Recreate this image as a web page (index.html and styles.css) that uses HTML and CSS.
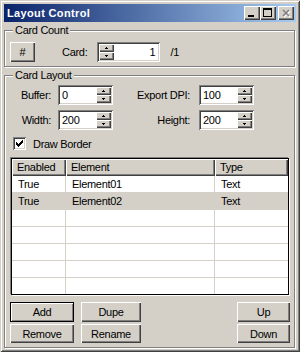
FILE: index.html
```html
<!DOCTYPE html>
<html lang="en">
<head>
    <meta charset="UTF-8">
    <title>Layout Control</title>
    <link rel="stylesheet" href="styles.css">
</head>
<body>

<div class="window">
    <div class="titlebar">
        <span class="title">Layout Control</span>
        <div class="caption-btns">
            <span class="cap-btn"><svg width="16" height="14"><rect x="4" y="9" width="6" height="2"/></svg></span>
            <span class="cap-btn"><svg width="16" height="14"><path d="M3 2h9v9h-9zM4 4v6h7v-6z" fill-rule="evenodd"/></svg></span>
            <span class="cap-btn close">
                <svg width="16" height="14">
                    <path d="M5 4L11 10M11 4L5 10" stroke="#fff" stroke-width="1.6" transform="translate(1 1)"/>
                    <path d="M5 4L11 10M11 4L5 10" stroke="#808080" stroke-width="1.6"/>
                </svg>
            </span>
        </div>
    </div>

    <!-- card count -->
    <div class="group">
        <div class="group-title">Card Count</div>
        <div class="count-row">
            <button class="btn hash">#</button>
            <span class="card-label">Card:</span>
            <div class="spin card-spin">
                <div class="spin-btns">
                    <span><svg width="3" height="2"><path d="M1 0h1v1h-1zM0 1h3v1h-3z"/></svg></span>
                    <span><svg width="3" height="2"><path d="M0 0h3v1h-3zM1 1h1v1h-1z"/></svg></span>
                </div>
                <span class="spin-value">1</span>
            </div>
            <span class="of">/1</span>
        </div>
    </div>

    <!-- card layout -->
    <div class="group">
        <div class="group-title">Card Layout</div>
        <div class="fields">
            <span class="field-label">Buffer:</span>
            <div class="spin">
                <span class="spin-value">0</span>
                <div class="spin-btns">
                    <span><svg width="3" height="2"><path d="M1 0h1v1h-1zM0 1h3v1h-3z"/></svg></span>
                    <span><svg width="3" height="2"><path d="M0 0h3v1h-3zM1 1h1v1h-1z"/></svg></span>
                </div>
            </div>
            <span class="field-label wide">Export DPI:</span>
            <div class="spin">
                <span class="spin-value">100</span>
                <div class="spin-btns">
                    <span><svg width="3" height="2"><path d="M1 0h1v1h-1zM0 1h3v1h-3z"/></svg></span>
                    <span><svg width="3" height="2"><path d="M0 0h3v1h-3zM1 1h1v1h-1z"/></svg></span>
                </div>
            </div>
            <span class="field-label">Width:</span>
            <div class="spin">
                <span class="spin-value">200</span>
                <div class="spin-btns">
                    <span><svg width="3" height="2"><path d="M1 0h1v1h-1zM0 1h3v1h-3z"/></svg></span>
                    <span><svg width="3" height="2"><path d="M0 0h3v1h-3zM1 1h1v1h-1z"/></svg></span>
                </div>
            </div>
            <span class="field-label wide">Height:</span>
            <div class="spin">
                <span class="spin-value">200</span>
                <div class="spin-btns">
                    <span><svg width="3" height="2"><path d="M1 0h1v1h-1zM0 1h3v1h-3z"/></svg></span>
                    <span><svg width="3" height="2"><path d="M0 0h3v1h-3zM1 1h1v1h-1z"/></svg></span>
                </div>
            </div>
        </div>

        <div class="check">
            <span class="check-box">
                <svg width="9" height="9"><path d="M6 0h1v1h-1zM5 1h2v1h-2zM0 2h1v1h-1zM4 2h3v1h-3zM0 3h2v1h-2zM3 3h3v1h-3zM0 4h5v1h-5zM1 5h3v1h-3zM2 6h1v1h-1z" transform="translate(1 1)"/></svg>
            </span>
            Draw Border
        </div>

        <div class="list">
            <table>
                <colgroup>
                    <col style="width: 54px">
                    <col style="width: 149px">
                    <col style="width: 73px">
                </colgroup>
                <thead>
                    <tr><th>Enabled</th><th>Element</th><th>Type</th></tr>
                </thead>
                <tbody>
                    <tr><td>True</td><td>Element01</td><td>Text</td></tr>
                    <tr class="sel"><td>True</td><td>Element02</td><td>Text</td></tr>
                    <tr><td></td><td></td><td></td></tr>
                    <tr><td></td><td></td><td></td></tr>
                    <tr><td></td><td></td><td></td></tr>
                    <tr><td></td><td></td><td></td></tr>
                    <tr><td></td><td></td><td></td></tr>
                </tbody>
            </table>
        </div>

        <div class="actions">
            <div class="btn-col first">
                <button class="btn default">Add</button>
                <button class="btn">Remove</button>
            </div>
            <div class="btn-col second">
                <button class="btn">Dupe</button>
                <button class="btn">Rename</button>
            </div>
            <div class="btn-col third">
                <button class="btn">Up</button>
                <button class="btn">Down</button>
            </div>
        </div>
    </div>
</div>

</body>
</html>
```

FILE: styles.css
```css
/* classic grey dialog */
body {
    margin: 0;
    background-color: #D4D0C8;
    font-family: "Liberation Sans", Arial, sans-serif;
    font-size: 11px;
    letter-spacing: -0.3px;
    color: #000;
}
.window {
    width: 300px;
    height: 352px;
    box-sizing: border-box;
    padding: 4px;
    background-color: #D4D0C8;
    box-shadow: inset 1px 1px #D4D0C8, inset -1px -1px #404040, inset 2px 2px #fff, inset -2px -2px #808080;
}
.titlebar {
    height: 18px;
    display: flex;
    align-items: center;
    padding: 0 2px 0 3px;
    background: linear-gradient(to right, #0A246A, #A6CAF0);
    color: #fff;
    font-weight: bold;
    letter-spacing: 0.35px;
}
.title {
    flex: 1;
}
.caption-btns {
    display: flex;
}
.cap-btn {
    width: 16px;
    height: 14px;
    background-color: #D4D0C8;
    box-shadow: inset 1px 1px #fff, inset -1px -1px #404040, inset -2px -2px #808080;
}
.cap-btn svg {
    display: block;
}
.cap-btn.close {
    margin-left: 2px;
}

/* group boxes */
.group {
    margin: 8px 1px 0 0;
    padding: 0 4px 4px 5px;
    border: 1px solid #808080;
    box-shadow: inset 1px 1px #fff, 1px 1px #fff;
}
.group-title {
    display: table;
    margin: -7px 0 0 3px;
    padding: 0 2px;
    line-height: 13px;
    background-color: #D4D0C8;
}
.count-row {
    display: flex;
    align-items: center;
    height: 20px;
    margin-top: 5px;
}
.card-label {
    margin: 0 10px 0 27px;
}
.of {
    margin-left: 10px;
}

/* buttons */
.btn {
    padding: 0;
    border: none;
    background-color: #D4D0C8;
    font-family: inherit;
    font-size: 11px;
    letter-spacing: -0.3px;
    color: #000;
    box-shadow: inset 1px 1px #fff, inset -1px -1px #404040, inset -2px -2px #808080;
}
.btn.default {
    box-shadow: inset 0 0 0 1px #000, inset 2px 2px #fff, inset -2px -2px #808080;
}
.hash {
    width: 25px;
    height: 20px;
}

/* spin boxes */
.spin {
    display: flex;
    height: 20px;
    box-sizing: border-box;
    padding: 2px;
    background-color: #fff;
    box-shadow: inset 1px 1px #808080, inset -1px -1px #fff, inset 2px 2px #404040, inset -2px -2px #D4D0C8;
}
.card-spin {
    width: 63px;
}
.spin-value {
    flex: 1;
    padding-left: 2px;
    line-height: 16px;
}
.card-spin .spin-value {
    text-align: right;
    padding: 0 3px 0 0;
}
.spin-btns {
    width: 15px;
    display: flex;
    flex-direction: column;
}
.spin-btns span {
    flex: 1;
    display: flex;
    align-items: center;
    justify-content: center;
    background-color: #D4D0C8;
    box-shadow: inset 1px 1px #fff, inset -1px -1px #404040, inset -2px -2px #808080;
}
.spin-btns svg {
    display: block;
}

.fields {
    display: grid;
    grid-template-columns: 38px 55px 86px 55px;
    grid-auto-rows: 20px;
    row-gap: 5px;
    align-items: center;
    margin: 3px 0 0 10px;
}
.field-label {
    text-align: right;
    padding-right: 7px;
}
.field-label.wide {
    padding-right: 9px;
}

.check {
    display: flex;
    align-items: center;
    height: 13px;
    margin: 7px 0 0 3px;
}
.check-box {
    width: 13px;
    height: 13px;
    box-sizing: border-box;
    padding: 2px;
    margin-right: 7px;
    background-color: #fff;
    box-shadow: inset 1px 1px #808080, inset -1px -1px #fff, inset 2px 2px #404040, inset -2px -2px #D4D0C8;
}
.check-box svg {
    display: block;
}

/* element list */
.list {
    height: 135px;
    margin: 8px 1px 0 1px;
    border: 1px solid #000;
    box-shadow: -1px -1px #808080, 1px 1px #fff;
    background-color: #fff;
    overflow: hidden;
}
.list table {
    width: 100%;
    table-layout: fixed;
    border-collapse: separate;
    border-spacing: 0;
}
.list th {
    height: 17px;
    padding: 0 0 0 5px;
    line-height: 17px;
    text-align: left;
    font-weight: normal;
    background-color: #D4D0C8;
    box-shadow: inset 1px 1px #fff, inset -1px -1px #404040, inset -2px -2px #808080;
}
.list td {
    height: 16px;
    padding: 0 0 0 6px;
    line-height: 16px;
    border-bottom: 1px solid #D4D0C8;
    border-right: 1px solid #D4D0C8;
    white-space: nowrap;
}
.list td:last-child {
    border-right: none;
}
.list tr.sel td {
    background-color: #D4D0C8;
}

.actions {
    display: flex;
    gap: 7px;
    margin-top: 7px;
}
.btn-col {
    display: flex;
    flex-direction: column;
    gap: 2px;
}
.btn-col .btn {
    height: 20px;
}
.btn-col .btn + .btn {
    height: 19px;
}
.first {
    width: 64px;
}
.second {
    width: 60px;
}
.third {
    width: 53px;
    margin-left: auto;
}
```
